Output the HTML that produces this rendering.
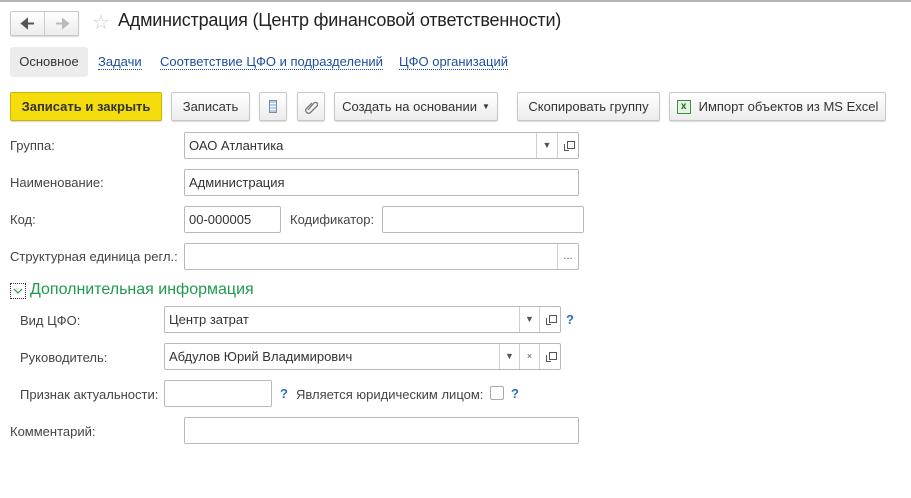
<!DOCTYPE html>
<html><head><meta charset="utf-8"><style>
*{box-sizing:border-box;margin:0;padding:0}
body{width:911px;height:498px;background:#fff;font-family:"Liberation Sans",Arial,sans-serif;font-size:13px;color:#333;position:relative;overflow:hidden}
.a{position:absolute}
.topline{left:0;top:0;width:911px;height:2px;background:#b5b5b5}
.btn{position:absolute;height:29px;border:1px solid #c8c8c8;border-radius:2px;background:linear-gradient(#fff,#ececec);box-shadow:0 1px 1px rgba(0,0,0,.15);display:flex;align-items:center;justify-content:center;color:#333}
.inp{position:absolute;height:27px;border:1px solid #b9b9b9;border-radius:2px;background:#fff;padding-left:4px;line-height:25px;color:#333}
.lbl{position:absolute;color:#444}
.link{position:absolute;top:54px;color:#1c4e9d;border-bottom:1px dotted #1c4e9d;line-height:15px}
.cell{position:absolute;top:0;height:25px;border-left:1px solid #cfcfcf;display:flex;align-items:center;justify-content:center;font-size:9px;color:#555}
.q{position:absolute;color:#2a6fba;font-weight:bold;font-size:13px}
.copy{width:9px;height:9px;position:relative}
.copy:before{content:"";position:absolute;left:3px;top:0;width:6px;height:6px;border:1px solid #555}
.copy:after{content:"";position:absolute;left:0;top:3px;width:4px;height:6px;border-left:1px solid #555;border-bottom:1px solid #555}
</style></head><body>
<div class="a topline"></div>
<div class="btn" style="left:10px;top:11px;width:69px;height:25px;padding:0">
<svg width="34" height="23" style="border-right:1px solid #ccc"><path d="M11 11.5h12M11 11.5l5-4v8z" stroke="#555" stroke-width="2" fill="#555"/></svg>
<svg width="34" height="23"><path d="M11 11.5h12M23 11.5l-5-4v8z" stroke="#bbb" stroke-width="2" fill="#bbb"/></svg></div>
<div class="a" style="left:92px;top:10px;font-size:20px;color:#ccc">☆</div>
<div class="a" style="left:118px;top:10px;font-size:18px;color:#222;letter-spacing:-0.2px">Администрация (Центр финансовой ответственности)</div>
<div class="a" style="left:10px;top:47px;width:78px;height:30px;background:#ececec;border-radius:3px;line-height:30px;text-align:center;color:#333">Основное</div>
<div class="link" style="left:98px">Задачи</div>
<div class="link" style="left:160px">Соответствие ЦФО и подразделений</div>
<div class="link" style="left:399px">ЦФО организаций</div>

<div class="btn" style="left:10px;top:92px;width:152px;background:#f5dc0c;border-color:#cfb500;font-weight:bold;color:#333">Записать и закрыть</div>
<div class="btn" style="left:171px;top:92px;width:79px">Записать</div>
<div class="btn" style="left:259px;top:92px;width:28px"><div style="width:8px;height:13px;border:1px solid #6d8fb3;background:repeating-linear-gradient(#b8cde3 0 2px,#fff 2px 3px)"></div></div>
<div class="btn" style="left:297px;top:92px;width:28px"><svg width="14" height="14"><path d="M4 10L10 3a2 2 0 0 1 3 3L6 13a3 3 0 0 1-4-4l6-6" stroke="#777" stroke-width="1.3" fill="none"/></svg></div>
<div class="btn" style="left:334px;top:92px;width:164px">Создать на основании <span style="font-size:8px;margin-left:5px">▼</span></div>
<div class="btn" style="left:517px;top:92px;width:143px">Скопировать группу</div>
<div class="btn" style="left:669px;top:92px;width:217px"><span style="display:inline-block;width:14px;height:14px;border:1px solid #3d8c40;color:#1f6b24;font-size:10px;font-weight:bold;line-height:12px;text-align:center;margin-right:8px;background:#e7f3e2">x</span>Импорт объектов из MS Excel</div>

<div class="lbl" style="left:10px;top:138px">Группа:</div>
<div class="inp" style="left:184px;top:132px;width:395px">ОАО Атлантика
<div class="cell" style="left:351px;width:21px">▼</div><div class="cell" style="left:372px;width:21px"><div class="copy"></div></div></div>
<div class="lbl" style="left:10px;top:175px">Наименование:</div>
<div class="inp" style="left:184px;top:169px;width:395px">Администрация</div>
<div class="lbl" style="left:10px;top:212px">Код:</div>
<div class="inp" style="left:184px;top:206px;width:97px">00-000005</div>
<div class="lbl" style="left:290px;top:212px">Кодификатор:</div>
<div class="inp" style="left:382px;top:206px;width:202px"></div>
<div class="lbl" style="left:10px;top:249px">Структурная единица регл.:</div>
<div class="inp" style="left:184px;top:243px;width:395px"><div class="cell" style="left:372px;width:21px;font-size:11px">...</div></div>

<div class="a" style="left:10px;top:283px;width:16px;height:16px;border:1px dotted #333"><svg width="14" height="14"><path d="M3 5l4 4 4-4" stroke="#2a9a4a" stroke-width="1.2" fill="none"/></svg></div>
<div class="a" style="left:30px;top:281px;font-size:16px;color:#1f9a4c">Дополнительная информация</div>

<div class="lbl" style="left:20px;top:313px">Вид ЦФО:</div>
<div class="inp" style="left:164px;top:306px;width:397px">Центр затрат
<div class="cell" style="left:354px;width:20px">▼</div><div class="cell" style="left:374px;width:21px"><div class="copy"></div></div></div>
<div class="q" style="left:566px;top:312px">?</div>
<div class="lbl" style="left:20px;top:350px">Руководитель:</div>
<div class="inp" style="left:164px;top:343px;width:397px">Абдулов Юрий Владимирович
<div class="cell" style="left:334px;width:20px">▼</div><div class="cell" style="left:354px;width:20px">×</div><div class="cell" style="left:374px;width:21px"><div class="copy"></div></div></div>
<div class="lbl" style="left:20px;top:387px">Признак актуальности:</div>
<div class="inp" style="left:164px;top:380px;width:108px"></div>
<div class="q" style="left:280px;top:386px">?</div>
<div class="lbl" style="left:296px;top:387px">Является юридическим лицом:</div>
<div class="a" style="left:490px;top:386px;width:14px;height:14px;border:1px solid #aaa;border-radius:2px"></div>
<div class="q" style="left:511px;top:386px">?</div>
<div class="lbl" style="left:10px;top:424px">Комментарий:</div>
<div class="inp" style="left:184px;top:417px;width:395px"></div>
</body></html>
